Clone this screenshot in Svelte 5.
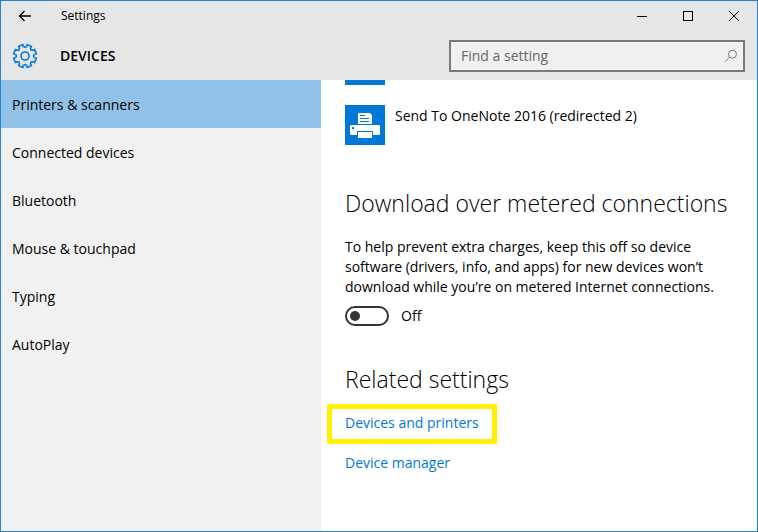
<script>
  const categories = [
    'Printers & scanners',
    'Connected devices',
    'Bluetooth',
    'Mouse & touchpad',
    'Typing',
    'AutoPlay'
  ];
  let selected = $state(0);
  let metered = $state(false);
  let query = $state('');

  // Gear outline: eight teeth around a 26px box
  const polar = (deg, r) => {
    const a = (deg * Math.PI) / 180;
    return `${(13 + r * Math.sin(a)).toFixed(2)} ${(13 - r * Math.cos(a)).toFixed(2)}`;
  };
  const gear =
    Array.from({ length: 8 }, (_, i) => {
      const c = i * 45 + 22.5;
      return `${i ? 'L' : 'M'}${polar(c - 11, 11.6)}L${polar(c + 11, 11.6)}L${polar(c + 13, 9.8)}Q${polar(c + 22.5, 7.4)} ${polar(c + 32, 9.8)}`;
    }).join('') + 'Z';
</script>

<div class="window">
  <header>
    <div class="titlebar">
      <button class="back" aria-label="Back">
        <svg width="14" height="12" viewBox="0 0 14 12"><path d="M13 6H1.5M6.5 1l-5 5 5 5" /></svg>
      </button>
      <span class="title">Settings</span>
      <div class="controls">
        <button aria-label="Minimize"><svg width="12" height="12" viewBox="0 0 12 12" shape-rendering="crispEdges"><path d="M1 6.5h10" /></svg></button>
        <button aria-label="Maximize"><svg width="12" height="12" viewBox="0 0 12 12" shape-rendering="crispEdges"><path d="M1.5 1.5h9v9h-9z" /></svg></button>
        <button aria-label="Close"><svg width="12" height="12" viewBox="0 0 12 12"><path d="M1 1l10 10M11 1L1 11" /></svg></button>
      </div>
    </div>
    <div class="bar">
      <svg class="gear" width="26" height="26" viewBox="0 0 26 26"><path d={gear} /><circle cx="13" cy="13" r="4" /></svg>
      <h1>DEVICES</h1>
      <div class="search">
        <input type="text" aria-label="Find a setting" placeholder="Find a setting" bind:value={query} />
        <svg width="14" height="14" viewBox="0 0 14 14"><circle cx="8.5" cy="5.2" r="4" /><path d="M5.6 8.1L1 12.7" /></svg>
      </div>
    </div>
  </header>

  <div class="body">
    <nav>
      {#each categories as name, i}
        <button class:selected={selected === i} onclick={() => (selected = i)}>{name}</button>
      {/each}
    </nav>

    <main>
      <div class="partial"></div>
      <div class="printer">
        <svg width="40" height="40" viewBox="0 0 40 40">
          <path fill="#0078d7" d="M0 0h40v40H0z" />
          <path fill="#fff" d="M13 8h12l2 2v9H13z" />
          <path stroke="#0078d7" d="M15 10.5h5M15 13.5h9M15 16.5h9" />
          <path fill="#fff" d="M6 20h28l1 1v8l-1 1H6l-1-1v-8z" />
          <path fill="#0078d7" d="M7 22h2v2H7zM12 26h16v8H12z" />
          <path fill="#fff" d="M13 27h14v6H13z" />
        </svg>
        <span>Send To OneNote 2016 (redirected 2)</span>
      </div>

      <h2>Download over metered connections</h2>
      <p>
        To help prevent extra charges, keep this off so device<br />
        software (drivers, info, and apps) for new devices won’t<br />
        download while you’re on metered Internet connections.
      </p>
      <label class="toggle">
        <input type="checkbox" bind:checked={metered} />
        <span>{metered ? 'On' : 'Off'}</span>
      </label>

      <h2 class="related">Related settings</h2>
      <div class="highlight"><a href="#printers">Devices and printers</a></div>
      <a class="manager" href="#manager">Device manager</a>
    </main>
  </div>
</div>

<style>
  :global(body) {
    margin: 0;
  }
  .window {
    box-sizing: border-box;
    min-height: 100vh;
    display: flex;
    flex-direction: column;
    border: 1px solid #2583cf;
    background: #fff;
    color: #000;
    font: 14px/20px 'Open Sans', 'Noto Sans', sans-serif;
  }
  button,
  input {
    font: inherit;
    color: inherit;
    margin: 0;
  }
  button {
    border: 0;
    padding: 0;
    background: none;
  }
  svg {
    flex: none;
    fill: none;
    stroke: #000;
  }
  header {
    background: #e6e6e6;
  }
  .titlebar {
    display: flex;
    align-items: center;
    height: 30px;
  }
  .titlebar button {
    display: flex;
    align-items: center;
    justify-content: center;
    width: 46px;
    height: 30px;
  }
  .titlebar .back {
    width: 48px;
  }
  .back svg {
    stroke-width: 1.3;
  }
  .title {
    margin-left: 12px;
    font-size: 12px;
  }
  .controls {
    display: flex;
    margin-left: auto;
  }
  .bar {
    display: flex;
    align-items: center;
    height: 49px;
    padding: 0 12px 0 11px;
  }
  .gear {
    stroke: #0078d7;
    stroke-width: 1.6;
  }
  h1 {
    margin: 0 0 0 22px;
    font-size: 14px;
    font-weight: 600;
  }
  .search {
    box-sizing: border-box;
    display: flex;
    align-items: center;
    flex: 0 1 296px;
    height: 32px;
    margin-left: auto;
    padding: 0 5px 0 10px;
    border: 2px solid #7a7a7a;
    background: #f0f0f0;
  }
  .search input {
    flex: 1;
    min-width: 0;
    padding: 0;
    border: 0;
    outline: 0;
    background: none;
  }
  .search input::placeholder {
    color: #666;
    opacity: 1;
  }
  .search svg {
    stroke: #777;
  }
  .body {
    display: flex;
    flex: 1;
  }
  nav {
    display: flex;
    flex-direction: column;
    flex: 0 0 320px;
    background: #f1f1f1;
  }
  nav button {
    height: 48px;
    padding: 2px 11px 0;
    text-align: left;
  }
  nav .selected {
    background: #91c1e7;
  }
  main {
    flex: 1;
    min-width: 0;
    padding: 0 24px;
  }
  .partial {
    width: 40px;
    height: 5px;
    margin-bottom: 20px;
    background: #0078d7;
  }
  .printer {
    display: flex;
    gap: 10px;
    line-height: 22px;
  }
  .printer svg {
    stroke: none;
  }
  h2 {
    margin: 42px 0 18px;
    font-size: 23px;
    line-height: 32px;
    font-weight: 300;
  }
  p {
    margin: 0 0 9px;
    white-space: nowrap;
  }
  .toggle {
    display: flex;
    align-items: center;
    gap: 12px;
    width: max-content;
  }
  .toggle input {
    appearance: none;
    box-sizing: border-box;
    display: flex;
    align-items: center;
    width: 44px;
    height: 20px;
    padding: 0 3px;
    border: 2px solid #333;
    border-radius: 10px;
  }
  .toggle input::before {
    content: '';
    width: 10px;
    height: 10px;
    border-radius: 5px;
    background: #333;
  }
  .toggle input:checked {
    justify-content: flex-end;
    border-color: #0078d7;
    background: #0078d7;
  }
  .toggle input:checked::before {
    background: #fff;
  }
  .related {
    margin: 37px 0 9px;
  }
  a {
    color: #0078d7;
    text-decoration: none;
  }
  .highlight {
    box-sizing: border-box;
    width: max-content;
    height: 40px;
    margin: 0 0 9px -18px;
    padding: 4px 13px;
    border: 5px solid #fff200;
  }
  .manager {
    display: block;
    width: max-content;
  }
</style>
